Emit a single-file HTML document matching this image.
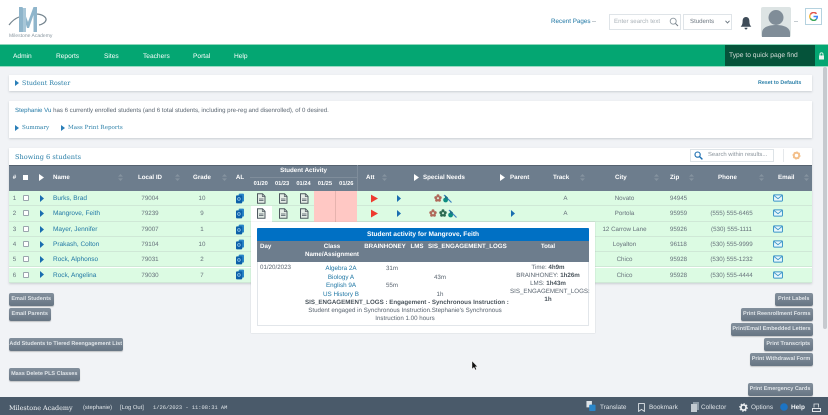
<!DOCTYPE html>
<html><head><meta charset="utf-8"><title>Student Roster</title>
<style>
*{box-sizing:border-box}
html,body{margin:0;padding:0}
html{background:#f1f3f6}
body{width:828px;height:415px;overflow:hidden;position:relative;background:#f1f3f6;font-family:"Liberation Sans",sans-serif;font-size:6.2px;color:#5a6570;text-rendering:geometricPrecision;filter:blur(.3px)}
.a{position:absolute;white-space:nowrap}
.lk{color:#2178a5}
.slab{font-family:"DejaVu Serif","Liberation Serif",serif;color:#2a7fa8}
.card{position:absolute;background:#fff;box-shadow:0 1px 2px rgba(90,100,110,.25)}
.nav{position:absolute;top:52px;color:#fff;font-size:6.6px;line-height:9px}
.h{position:absolute;color:#fff;font-weight:bold;font-size:6.2px;text-align:center;white-space:nowrap;background:#6d7d8d}
.row{position:absolute;left:9px;width:803px;height:15px;background:#dcfbe3;border-bottom:1px solid #cfe8d6}
.c{position:absolute;top:0;line-height:15px;text-align:center;white-space:nowrap;font-size:6.2px;color:#66717b}
.c.lk{color:#2178a5;font-size:6.5px}
.c svg{display:block}
.s{position:absolute;top:174px}
.btn{position:absolute;height:13px;line-height:12.500px;border-radius:2px;background:linear-gradient(#83909d,#677583);color:#dfe4e8;font-size:5.500px;font-weight:bold;text-align:center;white-space:nowrap;box-shadow:0 1px 1px rgba(0,0,0,.2)}
.foot{position:absolute;top:403px;color:#dfe4e8;font-size:6.4px;line-height:10px;white-space:nowrap}
</style></head><body>

<svg width="0" height="0" style="position:absolute">
<defs>
<symbol id="doc" viewBox="0 0 10 11"><path d="M1.500 .8H6.500L9 3.300V10.200H1.500Z" fill="#e4ece6" stroke="#4f5a60" stroke-width="1"/><path d="M3 6h4.500M3 7.500h4.500" stroke="#6f7a80" stroke-width="1"/><path d="M6.300 1V3.500H9" fill="none" stroke="#4f5a60" stroke-width=".7"/></symbol>
<symbol id="al" viewBox="0 0 9 11"><rect x="3" y="0" width="6" height="9" rx="1" fill="#2a86c8"/><rect x="0" y="2" width="7" height="9" rx="1" fill="#0b5fa8"/><circle cx="3.300" cy="6" r="1.500" fill="none" stroke="#9fd0ef" stroke-width=".8"/></symbol>
<symbol id="env" viewBox="0 0 11 8"><rect x=".6" y=".6" width="9.800" height="6.800" rx=".8" fill="#e8f7fb" stroke="#3a93c8" stroke-width="1.100"/><path d="M1 1.200L5.500 4.800L10 1.200" fill="none" stroke="#3a93c8" stroke-width="1"/></symbol>
<symbol id="star" viewBox="0 0 8 8"><circle cx="4" cy="1.800" r="1.500"/><circle cx="1.800" cy="3.600" r="1.500"/><circle cx="6.200" cy="3.600" r="1.500"/><circle cx="2.600" cy="6.200" r="1.500"/><circle cx="5.400" cy="6.200" r="1.500"/></symbol>
<symbol id="wh" viewBox="0 0 9 9"><path d="M1 1L4.500 4.500L8.500 8.500" stroke="#3a7fc0" stroke-width="1.200" fill="none"/><circle cx="2.600" cy="6" r="2.400" fill="#0d8e80"/><path d="M2 1L5 3.500L4 5.500L2 4Z" fill="#1f6f8a"/></symbol>
<symbol id="sort" viewBox="0 0 5 7"><path d="M2.500 0L5 2.600H0ZM0 4.400H5L2.500 7Z" fill="#85939f"/></symbol>
</defs></svg>

<!-- header -->
<div class="a" style="left:0;top:0;width:828px;height:44px;background:#fff"></div>
<svg class="a" style="left:8px;top:4px" width="40" height="30" viewBox="0 0 40 30">
<path d="M1 21C4 17 7 14.500 11 13" stroke="#75858f" stroke-width="1.200" fill="none"/>
<path d="M28 10C34 10 38.500 13 38 16C37.500 18.500 34 20.500 31 21" stroke="#75858f" stroke-width="1.300" fill="none"/>
<path d="M11 28V3H14.500L20 18L25.500 3H29V28H25.500V11L21 24H19L15 11V28Z" fill="#8fb5cb"/>
<path d="M15 4H18V28H15Z" fill="#a9c7d8"/>
</svg>
<div class="a" style="left:9px;top:33px;font-size:5px;line-height:6px;color:#8a97a0">Milestone Academy</div>
<div class="a lk" style="left:551px;top:18px;font-size:6.300px;line-height:8px">Recent Pages</div>
<div class="a" style="left:592px;top:21px;width:4px;height:1px;background:#c4cbd0"></div>
<div class="a" style="left:609px;top:14px;width:72px;height:16px;background:#fff;border:1px solid #dfe4e8;font-size:6.100px;line-height:14px;padding-left:4px;color:#aab2b8">Enter search text</div>
<svg class="a" style="left:669px;top:17px" width="10" height="10" viewBox="0 0 10 10"><circle cx="4.200" cy="4.200" r="3" fill="none" stroke="#8c979f" stroke-width=".9"/><path d="M6.500 6.500L9 9" stroke="#6f7a82" stroke-width="1"/></svg>
<div class="a" style="left:683px;top:14px;width:49px;height:16px;background:#fff;border:1px solid #dfe4e8;font-size:6.100px;line-height:14px;padding-left:6px;color:#6d7780">Students</div>
<svg class="a" style="left:725px;top:20px" width="5" height="4" viewBox="0 0 5 4"><path d="M.5 .8L2.500 3L4.500 .8" fill="none" stroke="#66717b" stroke-width=".9"/></svg>
<svg class="a" style="left:740px;top:16px" width="12" height="14" viewBox="0 0 12 14"><path d="M6 1C3.600 1 2.600 3 2.600 5.200C2.600 8 1.800 9.400 .6 10.800H11.400C10.200 9.400 9.400 8 9.400 5.200C9.400 3 8.400 1 6 1Z" fill="#3e4b58"/><path d="M4.500 11.800H7.500C7.400 13 6.800 13.500 6 13.500C5.200 13.500 4.600 13 4.500 11.800Z" fill="#3e4b58"/></svg>
<svg class="a" style="left:761px;top:7px" width="30" height="30" viewBox="0 0 30 30"><rect width="30" height="30" rx="2" fill="#dde4e4"/><circle cx="15" cy="10.500" r="7.500" fill="#808d98"/><path d="M1 30V26C1 20 8 18 15 18C22 18 29 20 29 26V30Z" fill="#808d98"/></svg>
<div class="a" style="left:794px;top:21px;width:4px;height:1px;background:#c4cbd0"></div>
<div class="a" style="left:805px;top:8px;width:17px;height:17px;background:#fff;border:1px solid #b5d2df"></div>
<svg class="a" style="left:809px;top:12px" width="9" height="9" viewBox="0 0 9 9"><path d="M7.500 1.800A3.700 3.700 0 0 0 1.300 2.600" fill="none" stroke="#e2574c" stroke-width="1.500"/><path d="M1.300 2.600A3.700 3.700 0 0 0 1.300 6.400" fill="none" stroke="#f2bd42" stroke-width="1.500"/><path d="M1.300 6.400A3.700 3.700 0 0 0 7.300 7.200" fill="none" stroke="#3aa757" stroke-width="1.500"/><path d="M4.500 4.500H8.300C8.300 5.600 8 6.500 7.300 7.200" fill="none" stroke="#4285f4" stroke-width="1.500"/></svg>

<!-- nav -->
<div class="a" style="left:0;top:44px;width:828px;height:23px;background:#04a672;border-top:1px solid #8fd6bb;border-bottom:1px solid #9adcc3"></div>
<div class="nav" style="left:13px">Admin</div>
<div class="nav" style="left:56px">Reports</div>
<div class="nav" style="left:104px">Sites</div>
<div class="nav" style="left:143px">Teachers</div>
<div class="nav" style="left:193px">Portal</div>
<div class="nav" style="left:234px">Help</div>
<div class="a" style="left:725px;top:45px;width:90px;height:21px;background:#05533a;color:#d4dcd8;font-size:6.700px;line-height:21.500px;padding-left:4px">Type to quick page find</div>
<svg class="a" style="left:818px;top:52px" width="7" height="8" viewBox="0 0 7 8"><rect x="1" y="3.500" width="5" height="4" fill="#e6f5ef"/><path d="M2 3.500V2.200C2 .4 5 .4 5 2.200V3.500" fill="none" stroke="#e6f5ef" stroke-width=".9"/></svg>

<!-- scrollbar -->
<div class="a" style="left:823px;top:67px;width:4px;height:262px;background:#c6cacf;border-radius:2px"></div>

<!-- cards -->
<div class="card" style="left:9px;top:75px;width:803px;height:16px"></div>
<svg class="a" style="left:15px;top:80px" width="4" height="6" viewBox="0 0 4 6"><path d="M0 0L4 3L0 6Z" fill="#2a7fb8"/></svg>
<div class="a slab" style="left:22px;top:78.500px;font-size:6.300px;line-height:10px">Student Roster</div>
<div class="a" style="left:758px;top:79px;font-size:5.300px;line-height:8px;font-weight:bold;color:#2a7fa8">Reset to Defaults</div>

<div class="card" style="left:9px;top:101px;width:803px;height:37px"></div>
<div class="a" style="left:15px;top:106px;font-size:6.100px;line-height:9px"><span class="lk">Stephanie Vu</span> has 6 currently enrolled students (and 6 total students, including pre-reg and disenrolled), of 0 desired.</div>
<svg class="a" style="left:15px;top:125px" width="4" height="6" viewBox="0 0 4 6"><path d="M0 0L4 3L0 6Z" fill="#2a7fb8"/></svg>
<div class="a slab" style="left:22px;top:123.500px;font-size:5.600px;line-height:9px">Summary</div>
<svg class="a" style="left:61px;top:125px" width="4" height="6" viewBox="0 0 4 6"><path d="M0 0L4 3L0 6Z" fill="#2a7fb8"/></svg>
<div class="a slab" style="left:68px;top:123.500px;font-size:5.600px;line-height:9px">Mass Print Reports</div>

<!-- table card -->
<div class="card" style="left:9px;top:148px;width:803px;height:135px"></div>
<div class="a slab" style="left:15px;top:151.500px;font-size:6.600px;line-height:10px">Showing 6 students</div>
<div class="a" style="left:690px;top:149px;width:84px;height:13px;background:#fff;border:1px solid #dde3e7;font-size:5.900px;line-height:11px;padding-left:17px;color:#8a949c">Search within results...</div>
<svg class="a" style="left:694px;top:151px" width="9" height="9" viewBox="0 0 9 9"><circle cx="3.600" cy="3.600" r="2.600" fill="none" stroke="#1a6db0" stroke-width="1.100"/><path d="M5.600 5.600L8.400 8.400" stroke="#1a6db0" stroke-width="1.400"/></svg>
<div class="a" style="left:783px;top:149px;width:29px;height:13px;background:#fff;border-left:1px solid #e5e8eb"></div>
<svg class="a" style="left:792px;top:151px" width="9" height="9" viewBox="0 0 9 9"><circle cx="4.500" cy="4.500" r="2.700" fill="none" stroke="#f3bf8a" stroke-width="2"/><circle cx="4.500" cy="4.500" r="3.600" fill="none" stroke="#f3bf8a" stroke-width="1" stroke-dasharray="1.200 1.600"/></svg>

<!-- table header -->
<div class="a" style="left:9px;top:164.500px;width:803px;height:26.500px;background:#6d7d8d;border-top:1px solid #55626f"></div>
<div class="h" style="left:9px;top:173px;width:11px;line-height:9px">#</div>
<div class="a" style="left:22.500px;top:175px;width:5px;height:5px;background:#fff"></div>
<svg class="a" style="left:39px;top:174px" width="5" height="7" viewBox="0 0 5 7"><path d="M0 0L5 3.500L0 7Z" fill="#fff"/></svg>
<div class="h" style="left:53px;top:173px;line-height:9px">Name</div>
<div class="h" style="left:125px;top:173px;width:50px;line-height:9px">Local ID</div>
<div class="h" style="left:182px;top:173px;width:40px;line-height:9px">Grade</div>
<div class="h" style="left:230px;top:173px;width:20px;line-height:9px">AL</div>
<div class="h" style="left:250px;top:166px;width:107px;line-height:9px">Student Activity</div>
<div class="h" style="left:250px;top:180px;width:21.400px;line-height:9px;font-size:5.700px">01/20</div>
<div class="h" style="left:271.400px;top:180px;width:21.400px;line-height:9px;font-size:5.700px">01/23</div>
<div class="h" style="left:292.800px;top:180px;width:21.400px;line-height:9px;font-size:5.700px">01/24</div>
<div class="h" style="left:314.200px;top:180px;width:21.400px;line-height:9px;font-size:5.700px">01/25</div>
<div class="h" style="left:335.600px;top:180px;width:21.400px;line-height:9px;font-size:5.700px">01/26</div>
<div class="a" style="left:250px;top:176.500px;width:107px;height:1px;background:#7f8d9b"></div>
<div class="a" style="left:357px;top:165px;width:1px;height:26px;background:#7f8d9b"></div>
<div class="h" style="left:366px;top:173px;line-height:9px">Att</div>
<svg class="a" style="left:414px;top:174px" width="5" height="7" viewBox="0 0 5 7"><path d="M0 0L5 3.500L0 7Z" fill="#fff"/></svg>
<div class="h" style="left:423px;top:173px;line-height:9px">Special Needs</div>
<svg class="a" style="left:500px;top:174px" width="5" height="7" viewBox="0 0 5 7"><path d="M0 0L5 3.500L0 7Z" fill="#fff"/></svg>
<div class="h" style="left:510px;top:173px;line-height:9px">Parent</div>
<div class="h" style="left:553px;top:173px;line-height:9px">Track</div>
<div class="h" style="left:615px;top:173px;line-height:9px">City</div>
<div class="h" style="left:670px;top:173px;line-height:9px">Zip</div>
<div class="h" style="left:718px;top:173px;line-height:9px">Phone</div>
<div class="h" style="left:778px;top:173px;line-height:9px">Email</div>
<svg class="s" style="left:117.500px" width="5" height="7"><use href="#sort"/></svg>
<svg class="s" style="left:174.500px" width="5" height="7"><use href="#sort"/></svg>
<svg class="s" style="left:221.500px" width="5" height="7"><use href="#sort"/></svg>
<svg class="s" style="left:382px" width="5" height="7"><use href="#sort"/></svg>
<svg class="s" style="left:579.500px" width="5" height="7"><use href="#sort"/></svg>
<svg class="s" style="left:653.500px" width="5" height="7"><use href="#sort"/></svg>
<svg class="s" style="left:688.500px" width="5" height="7"><use href="#sort"/></svg>
<svg class="s" style="left:759px" width="5" height="7"><use href="#sort"/></svg>
<svg class="s" style="left:804px" width="5" height="7"><use href="#sort"/></svg>

<!-- rows -->
<div class="row" style="top:191px">
<div class="c" style="left:0;width:11px">1</div><div class="c" style="left:13.500px;top:4px;width:6px;height:6px;background:#fff;border:1px solid #9aa5ad;border-radius:1px"></div>
<svg class="a" style="left:30.500px;top:3.500px" width="4" height="7" viewBox="0 0 4 7"><path d="M0 0L4 3.500L0 7Z" fill="#1a6db0"/></svg>
<div class="c lk" style="left:44px">Burks, Brad</div><div class="c" style="left:116px;width:50px">79004</div><div class="c" style="left:173px;width:40px">10</div>
<svg class="a" style="left:227px;top:1.500px" width="8" height="11"><use href="#al"/></svg>
<svg class="a" style="left:247px;top:1.500px" width="10" height="11"><use href="#doc"/></svg><svg class="a" style="left:268.500px;top:1.500px" width="10" height="11"><use href="#doc"/></svg><svg class="a" style="left:290px;top:1.500px" width="10" height="11"><use href="#doc"/></svg>
<div class="a" style="left:305px;top:0;width:43px;height:15px;background:linear-gradient(90deg,#ffc8c4 0 21px,#e6b3ae 21px 22px,#ffc8c4 22px)"></div>
<svg class="a" style="left:362px;top:3px" width="7" height="9" viewBox="0 0 8 9"><path d="M0 0L8 4.500L0 9Z" fill="#ee3b2f"/></svg>
<svg class="a" style="left:388px;top:3.500px" width="4" height="7" viewBox="0 0 4 7"><path d="M0 0L4 3.500L0 7Z" fill="#1a6db0"/></svg>
<svg class="a" style="left:425px;top:3px;fill:#b0695a" width="8" height="8"><use href="#star"/></svg><svg class="a" style="left:434px;top:2.500px" width="9" height="9"><use href="#wh"/></svg>
<div class="c" style="left:534px;width:45px">A</div><div class="c" style="left:579px;width:73px">Novato</div><div class="c" style="left:652px;width:35px">94945</div>
<svg class="a" style="left:764px;top:3px" width="10" height="8"><use href="#env"/></svg>
</div>
<div class="row" style="top:206px;height:16px">
<div class="c" style="left:0;width:11px">2</div><div class="c" style="left:13.500px;top:4px;width:6px;height:6px;background:#fff;border:1px solid #9aa5ad;border-radius:1px"></div>
<svg class="a" style="left:30.500px;top:3.500px" width="4" height="7" viewBox="0 0 4 7"><path d="M0 0L4 3.500L0 7Z" fill="#1a6db0"/></svg>
<div class="c lk" style="left:44px">Mangrove, Feith</div><div class="c" style="left:116px;width:50px">79239</div><div class="c" style="left:173px;width:40px">9</div>
<svg class="a" style="left:227px;top:1.500px" width="8" height="11"><use href="#al"/></svg>
<div class="a" style="left:242px;top:0;width:21px;height:17px;background:#fff"></div>
<svg class="a" style="left:247px;top:1.500px" width="10" height="11"><use href="#doc"/></svg><svg class="a" style="left:268.500px;top:1.500px" width="10" height="11"><use href="#doc"/></svg><svg class="a" style="left:290px;top:1.500px" width="10" height="11"><use href="#doc"/></svg>
<div class="a" style="left:305px;top:0;width:43px;height:16px;background:linear-gradient(90deg,#ffc8c4 0 21px,#e6b3ae 21px 22px,#ffc8c4 22px)"></div>
<svg class="a" style="left:362px;top:3px" width="7" height="9" viewBox="0 0 8 9"><path d="M0 0L8 4.500L0 9Z" fill="#ee3b2f"/></svg>
<svg class="a" style="left:388px;top:3.500px" width="4" height="7" viewBox="0 0 4 7"><path d="M0 0L4 3.500L0 7Z" fill="#1a6db0"/></svg>
<svg class="a" style="left:420px;top:3px;fill:#b0695a" width="8" height="8"><use href="#star"/></svg><svg class="a" style="left:430px;top:3px;fill:#2a6a50" width="8" height="8"><use href="#star"/></svg><svg class="a" style="left:439px;top:2.500px" width="9" height="9"><use href="#wh"/></svg>
<svg class="a" style="left:502px;top:3.500px" width="4" height="7" viewBox="0 0 4 7"><path d="M0 0L4 3.500L0 7Z" fill="#1a6db0"/></svg>
<div class="c" style="left:534px;width:45px">A</div><div class="c" style="left:579px;width:73px">Portola</div><div class="c" style="left:652px;width:35px">95959</div><div class="c" style="left:687px;width:71px">(555) 555-6465</div>
<svg class="a" style="left:764px;top:3px" width="10" height="8"><use href="#env"/></svg>
</div>
<div class="row" style="top:222px">
<div class="c" style="left:0;width:11px">3</div><div class="c" style="left:13.500px;top:4px;width:6px;height:6px;background:#fff;border:1px solid #9aa5ad;border-radius:1px"></div>
<svg class="a" style="left:30.500px;top:3.500px" width="4" height="7" viewBox="0 0 4 7"><path d="M0 0L4 3.500L0 7Z" fill="#1a6db0"/></svg>
<div class="c lk" style="left:44px">Mayer, Jennifer</div><div class="c" style="left:116px;width:50px">79007</div><div class="c" style="left:173px;width:40px">1</div>
<svg class="a" style="left:227px;top:1.500px" width="8" height="11"><use href="#al"/></svg>
<div class="c" style="left:579px;width:73px">12 Carrow Lane</div><div class="c" style="left:652px;width:35px">95926</div><div class="c" style="left:687px;width:71px">(530) 555-1111</div>
<svg class="a" style="left:764px;top:3px" width="10" height="8"><use href="#env"/></svg>
</div>
<div class="row" style="top:237px">
<div class="c" style="left:0;width:11px">4</div><div class="c" style="left:13.500px;top:4px;width:6px;height:6px;background:#fff;border:1px solid #9aa5ad;border-radius:1px"></div>
<svg class="a" style="left:30.500px;top:3.500px" width="4" height="7" viewBox="0 0 4 7"><path d="M0 0L4 3.500L0 7Z" fill="#1a6db0"/></svg>
<div class="c lk" style="left:44px">Prakash, Colton</div><div class="c" style="left:116px;width:50px">79104</div><div class="c" style="left:173px;width:40px">10</div>
<svg class="a" style="left:227px;top:1.500px" width="8" height="11"><use href="#al"/></svg>
<div class="c" style="left:579px;width:73px">Loyalton</div><div class="c" style="left:652px;width:35px">96118</div><div class="c" style="left:687px;width:71px">(530) 555-9999</div>
<svg class="a" style="left:764px;top:3px" width="10" height="8"><use href="#env"/></svg>
</div>
<div class="row" style="top:252px">
<div class="c" style="left:0;width:11px">5</div><div class="c" style="left:13.500px;top:4px;width:6px;height:6px;background:#fff;border:1px solid #9aa5ad;border-radius:1px"></div>
<svg class="a" style="left:30.500px;top:3.500px" width="4" height="7" viewBox="0 0 4 7"><path d="M0 0L4 3.500L0 7Z" fill="#1a6db0"/></svg>
<div class="c lk" style="left:44px">Rock, Alphonso</div><div class="c" style="left:116px;width:50px">79031</div><div class="c" style="left:173px;width:40px">2</div>
<svg class="a" style="left:227px;top:1.500px" width="8" height="11"><use href="#al"/></svg>
<div class="c" style="left:579px;width:73px">Chico</div><div class="c" style="left:652px;width:35px">95928</div><div class="c" style="left:687px;width:71px">(530) 555-1232</div>
<svg class="a" style="left:764px;top:3px" width="10" height="8"><use href="#env"/></svg>
</div>
<div class="row" style="top:267.500px">
<div class="c" style="left:0;width:11px">6</div><div class="c" style="left:13.500px;top:4px;width:6px;height:6px;background:#fff;border:1px solid #9aa5ad;border-radius:1px"></div>
<svg class="a" style="left:30.500px;top:3.500px" width="4" height="7" viewBox="0 0 4 7"><path d="M0 0L4 3.500L0 7Z" fill="#1a6db0"/></svg>
<div class="c lk" style="left:44px">Rock, Angelina</div><div class="c" style="left:116px;width:50px">79030</div><div class="c" style="left:173px;width:40px">7</div>
<svg class="a" style="left:227px;top:1.500px" width="8" height="11"><use href="#al"/></svg>
<div class="c" style="left:579px;width:73px">Chico</div><div class="c" style="left:652px;width:35px">95928</div><div class="c" style="left:687px;width:71px">(530) 555-4444</div>
<svg class="a" style="left:764px;top:3px" width="10" height="8"><use href="#env"/></svg>
</div>

<!-- popup -->
<div class="a" style="left:251px;top:222px;width:344px;height:111px;background:#fff;box-shadow:0 0 1px rgba(90,100,110,.35)"></div>
<div class="a" style="left:257px;top:228px;width:332px;height:98px;border:1px solid #e2e6ea"></div>
<div class="a" style="left:257px;top:228px;width:332px;height:13.500px;background:#0070c4;border-radius:1px 1px 0 0;color:#fff;font-weight:bold;font-size:6.600px;line-height:13.500px;text-align:center">Student activity for Mangrove, Feith</div>
<div class="a" style="left:257px;top:241px;width:332px;height:20.500px;background:#6d7d8d"></div>
<div class="h" style="left:260px;top:243px;line-height:8px">Day</div>
<div class="h" style="left:303px;top:243px;width:58px;line-height:7.500px;white-space:normal">Class Name/Assignment</div>
<div class="h" style="left:364px;top:243px;width:42px;line-height:8px">BRAINHONEY</div>
<div class="h" style="left:409px;top:243px;width:16px;line-height:8px">LMS</div>
<div class="h" style="left:428px;top:243px;width:78px;line-height:8px">SIS_ENGAGEMENT_LOGS</div>
<div class="h" style="left:510px;top:243px;width:76px;line-height:8px">Total</div>
<div class="a" style="left:260px;top:263px;font-size:6.200px;line-height:9px">01/20/2023</div>
<div class="a lk" style="left:311px;top:264px;width:60px;text-align:center;font-size:6.300px;line-height:9px">Algebra 2A</div>
<div class="a lk" style="left:311px;top:272.500px;width:60px;text-align:center;font-size:6.300px;line-height:9px">Biology A</div>
<div class="a lk" style="left:311px;top:281px;width:60px;text-align:center;font-size:6.300px;line-height:9px">English 9A</div>
<div class="a lk" style="left:311px;top:289.500px;width:60px;text-align:center;font-size:6.300px;line-height:9px">US History B</div>
<div class="a" style="left:377px;top:264px;width:30px;text-align:center;font-size:6.200px;line-height:9px">31m</div>
<div class="a" style="left:377px;top:281px;width:30px;text-align:center;font-size:6.200px;line-height:9px">55m</div>
<div class="a" style="left:425px;top:272.500px;width:30px;text-align:center;font-size:6.200px;line-height:9px">43m</div>
<div class="a" style="left:425px;top:289.500px;width:30px;text-align:center;font-size:6.200px;line-height:9px">1h</div>
<div class="a" style="left:510px;top:264px;width:76px;text-align:center;font-size:6.200px;line-height:8px">Time: <b style="color:#4a545c">4h9m</b></div>
<div class="a" style="left:510px;top:272px;width:76px;text-align:center;font-size:6.200px;line-height:8px">BRAINHONEY: <b style="color:#4a545c">1h26m</b></div>
<div class="a" style="left:510px;top:280px;width:76px;text-align:center;font-size:6.200px;line-height:8px">LMS: <b style="color:#4a545c">1h43m</b></div>
<div class="a" style="left:510px;top:288px;width:76px;text-align:center;font-size:6.200px;line-height:8px">SIS_ENGAGEMENT_LOGS:</div>
<div class="a" style="left:510px;top:296px;width:76px;text-align:center;font-size:6.200px;line-height:8px"><b style="color:#4a545c">1h</b></div>
<div class="a" style="left:305px;top:298.500px;width:200px;text-align:center;font-size:6.200px;line-height:8px;font-weight:bold;color:#4a545c">SIS_ENGAGEMENT_LOGS : Engagement - Synchronous Instruction :</div>
<div class="a" style="left:305px;top:306.500px;width:200px;text-align:center;font-size:6.200px;line-height:8px">Student engaged in Synchronous Instruction.Stephanie's Synchronous</div>
<div class="a" style="left:305px;top:314.500px;width:200px;text-align:center;font-size:6.200px;line-height:8px">Instruction 1.00 hours</div>

<!-- buttons -->
<div class="btn" style="left:9px;top:292.500px;width:44.500px">Email Students</div>
<div class="btn" style="left:9px;top:307.500px;width:41.500px">Email Parents</div>
<div class="btn" style="left:9px;top:338px;width:113.500px">Add Students to Tiered Reengagement List</div>
<div class="btn" style="left:9px;top:368px;width:70.500px">Mass Delete PLS Classes</div>
<div class="btn" style="left:775px;top:292.500px;width:37.500px">Print Labels</div>
<div class="btn" style="left:741px;top:307.500px;width:71.500px">Print Reenrollment Forms</div>
<div class="btn" style="left:730.500px;top:322.500px;width:82px">Print/Email Embedded Letters</div>
<div class="btn" style="left:764px;top:338px;width:48.500px">Print Transcripts</div>
<div class="btn" style="left:749.500px;top:353px;width:63px">Print Withdrawal Form</div>
<div class="btn" style="left:747.500px;top:383px;width:65px">Print Emergency Cards</div>

<!-- cursor -->
<svg class="a" style="left:471px;top:361px" width="7" height="10" viewBox="0 0 7 10"><path d="M1 0V8L3 6.300L4.300 9L5.500 8.400L4.300 5.800H6.500Z" fill="#111" stroke="#fff" stroke-width=".4"/></svg>

<!-- footer -->
<div class="a" style="left:0;top:397px;width:828px;height:18px;background:#4a5a6a"></div>
<div class="foot" style="left:9px;font-family:'DejaVu Serif','Liberation Serif',serif;font-size:6.400px;color:#f0f3f5">Milestone Academy</div>
<div class="foot" style="left:83px;font-size:5.800px">(stephanie)</div>
<div class="foot" style="left:120px;font-size:5.800px">[Log Out]</div>
<div class="foot" style="left:153px;font-family:'Liberation Mono',monospace;font-size:5.400px">1/26/2023 - 11:08:31 AM</div>
<svg class="a" style="left:586px;top:401px" width="10" height="10" viewBox="0 0 10 11"><rect x="0" y="0" width="6" height="7" fill="#dfe4e8"/><rect x="3" y="4" width="7" height="7" rx="1" fill="#2a86c8"/></svg>
<div class="foot" style="left:600px">Translate</div>
<svg class="a" style="left:638px;top:403px" width="7" height="9" viewBox="0 0 7 9"><path d="M.6 .6H6.400V8.400L3.500 6.400L.6 8.400Z" fill="none" stroke="#dfe4e8" stroke-width=".9"/></svg>
<div class="foot" style="left:649px">Bookmark</div>
<svg class="a" style="left:691px;top:402px" width="8" height="10" viewBox="0 0 8 10"><rect x="2" y="0" width="6" height="8" fill="#8c9aa6"/><rect x="0" y="2" width="6" height="8" fill="#c3cbd2"/></svg>
<div class="foot" style="left:701px">Collector</div>
<svg class="a" style="left:739px;top:403px" width="9" height="9" viewBox="0 0 9 9"><circle cx="4.500" cy="4.500" r="2.600" fill="none" stroke="#eef1f3" stroke-width="1.800"/><circle cx="4.500" cy="4.500" r="3.900" fill="none" stroke="#eef1f3" stroke-width="1" stroke-dasharray="1.300 1.750"/></svg>
<div class="foot" style="left:751px">Options</div>
<svg class="a" style="left:780px;top:403px" width="8" height="8" viewBox="0 0 8 8"><circle cx="4" cy="4" r="3.800" fill="#1c74c4"/></svg>
<div class="foot" style="left:791px;font-weight:bold;color:#f3f5f7">Help</div>
<svg class="a" style="left:812px;top:403px" width="9" height="9" viewBox="0 0 9 9"><path d="M.5 8.500V5.500H8.500V8.500Z" fill="none" stroke="#dfe4e8"/><path d="M2 4.500V1H6.500V4.500" fill="none" stroke="#dfe4e8" stroke-width=".8"/></svg>

</body></html>
